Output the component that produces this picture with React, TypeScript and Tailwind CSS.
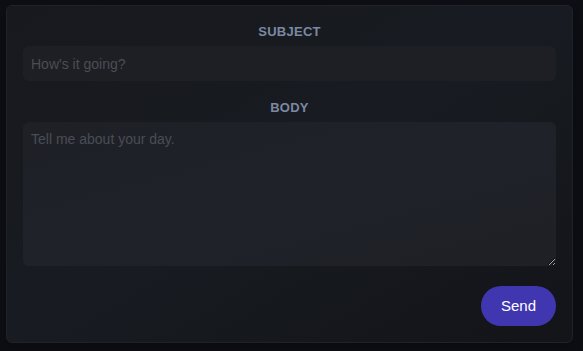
import React, { useState } from 'react';

export default function App() {
  const [subject, setSubject] = useState('');
  const [body, setBody] = useState('');

  return (
    <div className="min-h-screen w-full bg-[#0c0e13] pt-[5px] pl-[6px] pr-[10px] pb-[8px]" style={{ fontFamily: '"Liberation Sans", Arial, sans-serif' }}>
      <form
        onSubmit={(e) => e.preventDefault()}
        className="flex h-[338px] flex-col rounded-[6px] border border-[#1f2228] bg-gradient-to-br from-[#17191e] via-[#181b21] to-[#121418] px-[16px] pt-[18px] pb-[16px] shadow-lg"
      >
        <label className="block text-center text-[13px] font-bold leading-[16px] tracking-[0.02em] text-[#7b89a2]">SUBJECT</label>
        <input
          value={subject}
          onChange={(e) => setSubject(e.target.value)}
          placeholder="How's it going?"
          className="mt-[6px] h-[35px] w-full rounded-[6px] bg-[#1d1f24] px-[8px] text-[14px] text-[#c8ccd4] placeholder:text-[#4a4d55] outline-none"
        />

        <label className="mt-[19px] block text-center text-[13px] font-bold leading-[16px] tracking-[0.02em] text-[#7b89a2]">BODY</label>
        <textarea
          value={body}
          onChange={(e) => setBody(e.target.value)}
          placeholder="Tell me about your day."
          className="mt-[6px] h-[144px] w-full rounded-[6px] bg-gradient-to-br from-[#1e2026] via-[#1f2229] to-[#1e2025] px-[8px] py-[9px] text-[14px] leading-[17px] text-[#c8ccd4] placeholder:text-[#4a4d55] outline-none"
        />

        <div className="mt-[20px] flex justify-end">
          <button
            type="submit"
            className="h-[40px] w-[75px] rounded-full bg-[#4037b0] text-[15px] text-white"
          >
            Send
          </button>
        </div>
      </form>
    </div>
  );
}
